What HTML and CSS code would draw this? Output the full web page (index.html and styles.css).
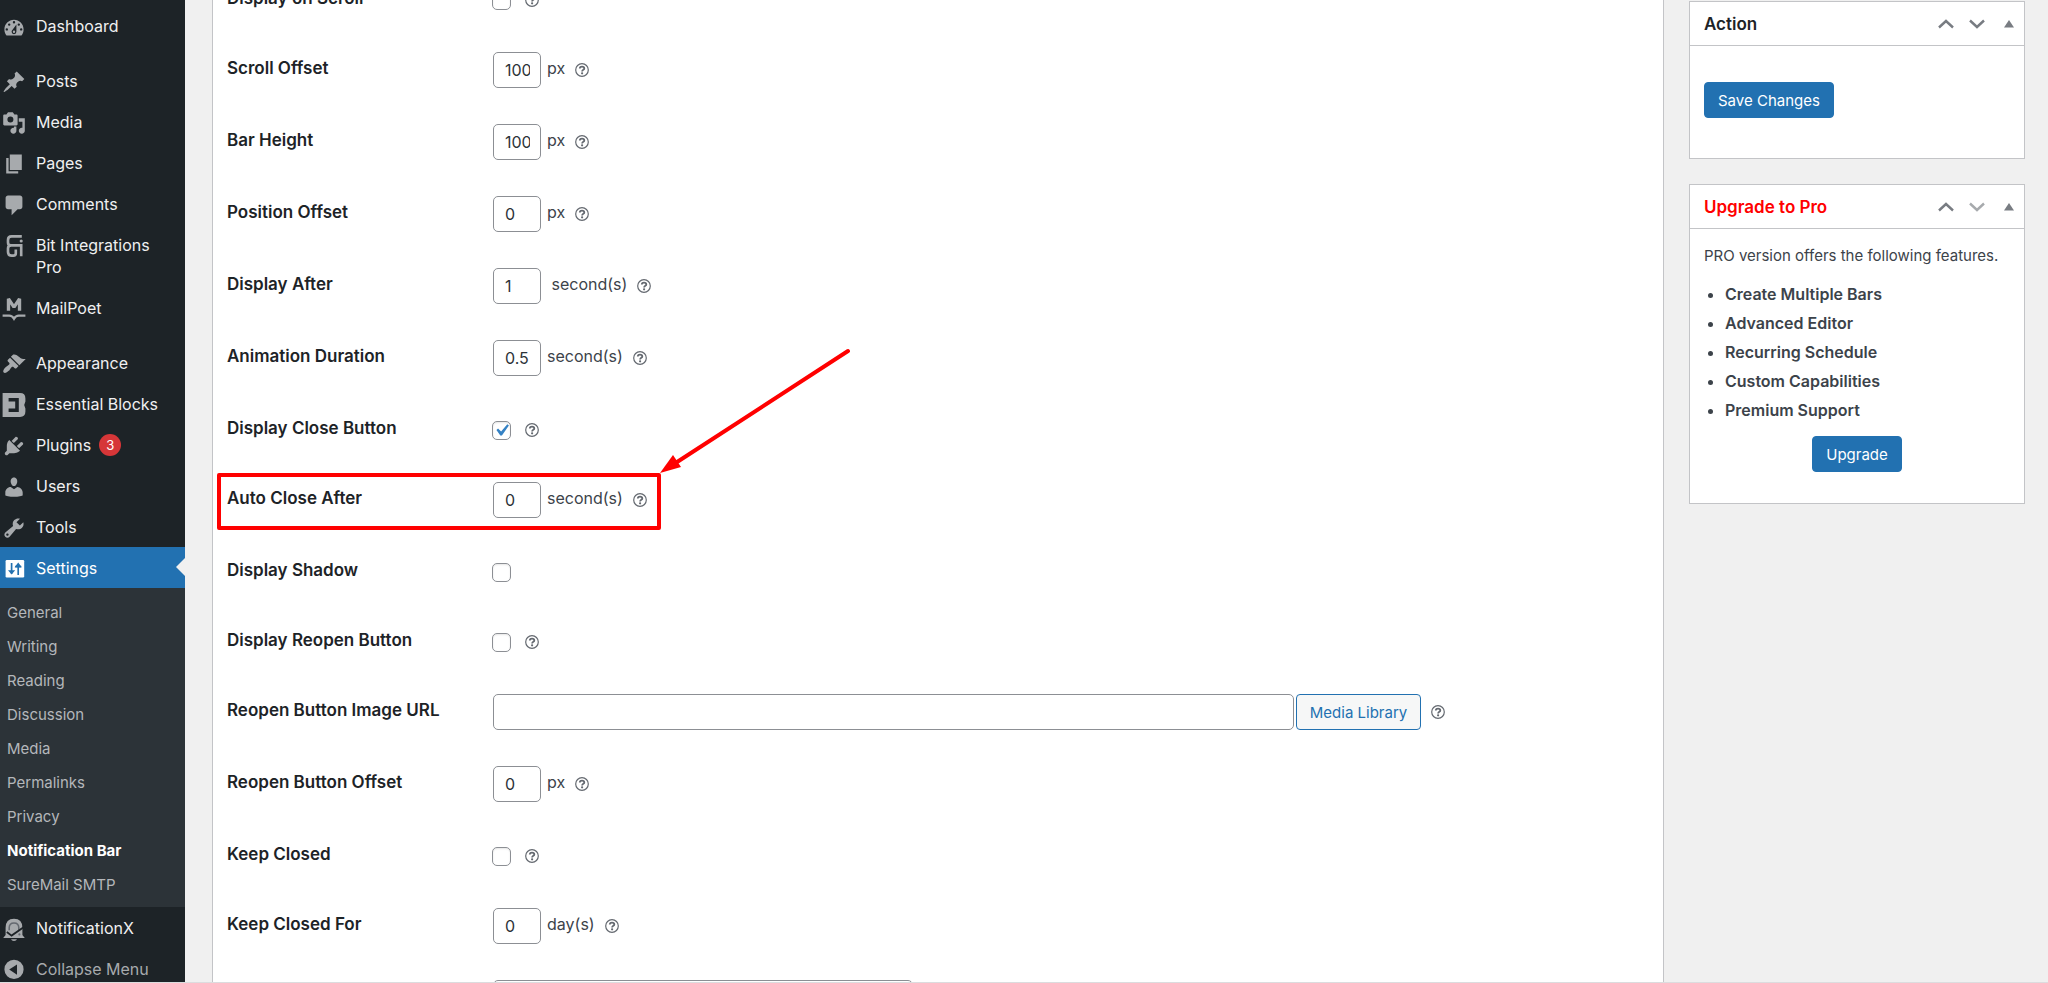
FILE: index.html
```html
<!DOCTYPE html>
<html lang="en">
<head>
    <meta charset="UTF-8">
    <meta name="viewport" content="width=device-width, initial-scale=1.0">
    <title>Notification Bar Settings</title>
    <link rel="stylesheet" href="styles.css">
</head>
<body>

<!-- Shared icons -->
<svg class="sprite" aria-hidden="true">
    <symbol id="help" viewBox="0 0 14 14">
        <circle cx="7" cy="7" r="6.3" fill="none" stroke="currentColor" stroke-width="1.2"/>
        <path d="M4.8 5.6C4.8 4.1 5.800 3.600 7 3.600s2.300.6 2.300 1.800C9.300 6.900 7.100 6.700 7.100 8.500" fill="none" stroke="currentColor" stroke-width="1.8"/>
        <circle cx="7.1" cy="10.3" r="1.1" fill="currentColor"/>
    </symbol>
    <symbol id="chevron-up" viewBox="0 0 16 10">
        <path d="M1 8.500L8 2l7 6.500" fill="none" stroke="currentColor" stroke-width="2.4"/>
    </symbol>
    <symbol id="chevron-down" viewBox="0 0 16 10">
        <path d="M1 1.500L8 8l7-6.500" fill="none" stroke="currentColor" stroke-width="2.4"/>
    </symbol>
    <symbol id="triangle" viewBox="0 0 10 8">
        <path d="M5 0l5 7.500H0z" fill="currentColor"/>
    </symbol>
</svg>

<div class="app">

    <!-- Admin menu -->
    <nav class="menu">
        <a href="#" class="menu-item">
            <svg class="icon" viewBox="0 0 20 20"><path fill-rule="evenodd" d="M3.76 17h12.48c1.1-1.370 1.760-3.110 1.760-5 0-4.420-3.580-8-8-8s-8 3.580-8 8c0 1.890.660 3.630 1.760 5zM10 5a1 1 0 1 1 0 2 1 1 0 0 1 0-2zM6 7a1 1 0 1 1 0 2 1 1 0 0 1 0-2zm8 0a1 1 0 1 1 0 2 1 1 0 0 1 0-2zm-5.370 5.550L12 8v6a2 2 0 1 1-4 0c0-.570.240-1.080.630-1.450zM4 11a1 1 0 1 1 0 2 1 1 0 0 1 0-2zm12 0a1 1 0 1 1 0 2 1 1 0 0 1 0-2zm-5 3a1 1 0 1 0-2 0 1 1 0 0 0 2 0z"/></svg>
            <span>Dashboard</span>
        </a>
        <div class="separator"></div>
        <a href="#" class="menu-item">
            <svg class="icon" viewBox="0 0 20 20"><path d="M10.44 3.02l1.82-1.82 6.36 6.35-1.83 1.82c-1.05-.68-2.48-.57-3.41.36l-.75.75c-.92.93-1.04 2.35-.35 3.41l-1.83 1.82-2.41-2.41-2.8 2.79c-.42.42-3.38 2.71-3.8 2.29s1.86-3.39 2.28-3.81l2.79-2.79L4.1 9.36l1.83-1.82c1.05.69 2.48.57 3.4-.36l.75-.75c.93-.92 1.05-2.35.36-3.41z"/></svg>
            <span>Posts</span>
        </a>
        <a href="#" class="menu-item">
            <svg class="icon" viewBox="0 0 20 20"><path fill-rule="evenodd" d="M13 11V4c0-.55-.45-1-1-1h-1.67L9 1H5L3.67 3H2c-.55 0-1 .45-1 1v7c0 .55.45 1 1 1h10c.55 0 1-.45 1-1zM7 4.500a2.500 2.500 0 1 1 0 5 2.500 2.500 0 0 1 0-5zM14 6h5v10.500c0 1.380-1.120 2.500-2.500 2.500S14 17.880 14 16.500s1.120-2.500 2.500-2.500c.170 0 .340.020.500.050V9h-3V6zm-4 8.050V13h2v3.500c0 1.380-1.120 2.500-2.500 2.500S7 17.880 7 16.500 8.120 14 9.500 14c.170 0 .340.020.500.050z"/></svg>
            <span>Media</span>
        </a>
        <a href="#" class="menu-item">
            <svg class="icon" viewBox="0 0 20 20"><path d="M6.500 15V2h10v13h-10zm-1 1h8v2h-10V5h2v11z"/></svg>
            <span>Pages</span>
        </a>
        <a href="#" class="menu-item">
            <svg class="icon" viewBox="0 0 20 20"><path d="M5 2h10c1.100 0 2 .9 2 2v7.500c0 1.100-.9 2-2 2h-2l-5 5v-5H5c-1.100 0-2-.9-2-2V4c0-1.100.9-2 2-2z"/></svg>
            <span>Comments</span>
        </a>
        <a href="#" class="menu-item">
            <svg class="icon" viewBox="0 0 20 20"><g fill="none" stroke="currentColor" stroke-width="2.200"><path d="M16.500 2H8Q5 2 5 5v2q0 2.500 2.500 2.500H16v9"/><path d="M7.500 9.500Q5 9.500 5 12v3q0 3 3 3h1.500q2 0 2-2v-3"/></g><circle cx="16" cy="5.800" r="1.300"/></svg>
            <span>Bit Integrations Pro</span>
        </a>
        <a href="#" class="menu-item">
            <svg class="icon" viewBox="0 0 20 20"><g fill="none" stroke="currentColor"><path stroke-width="2.800" d="M5.400 11.500V1.500L10 8.500l4.600-7v10" stroke-linejoin="bevel"/><path stroke-width="2" d="M.5 15.500h5.500q2.500 0 4 2.500 1.500-2.500 4-2.500h5.500"/></g></svg>
            <span>MailPoet</span>
        </a>
        <div class="separator"></div>
        <a href="#" class="menu-item">
            <svg class="icon" viewBox="0 0 20 20"><path d="M14.480 11.060L7.410 3.990l1.500-1.500c.5-.56 2.300-.47 3.510.32 1.210.8 1.430 1.280 2.910 2.100 1.180.64 2.450 1.260 4.450.85zm-.71.71L6.700 4.700 4.930 6.470c-.39.39-.39 1.020 0 1.410l1.060 1.060c.39.39.39 1.030 0 1.420-.6.6-1.430 1.110-2.210 1.690-.35.26-.7.53-1.010.84C1.430 14.230.4 16.080 1.400 17.070c.99 1 2.840-.03 4.180-1.360.31-.31.58-.66.85-1.020.57-.78 1.080-1.610 1.690-2.210.39-.39 1.020-.39 1.410 0l1.060 1.060c.39.39 1.020.39 1.410 0z"/></svg>
            <span>Appearance</span>
        </a>
        <a href="#" class="menu-item">
            <svg class="icon" viewBox="0 0 20 20"><path d="M.5 0H15q4.500 0 4.500 4.500v2.500l-1 3 1 3v2.500q0 4.500-4.500 4.500H.5z"/><path fill="#1d2327" d="M5.500 4.200H14v11.600H5.500V13H11V7H5.500z"/><path d="M5 8.500h4.500v3H5z"/></svg>
            <span>Essential Blocks</span>
        </a>
        <a href="#" class="menu-item">
            <svg class="icon" viewBox="0 0 20 20"><path d="M13.110 4.360L9.870 7.600 8 5.730l3.240-3.240c.35-.34 1.050-.2 1.560.32.52.51.66 1.210.31 1.550zm-8 1.770l.91-1.120 9.010 9.010-1.190.84c-.71.71-2.630 1.160-3.820 1.160H6.140L4.900 17.260c-.59.59-1.540.59-2.120 0-.59-.58-.59-1.530 0-2.120l1.240-1.240v-3.880c0-1.130.4-3.190 1.090-3.890zm7.260 3.970l3.240-3.240c.34-.35 1.040-.21 1.550.31.52.51.66 1.210.31 1.550l-3.240 3.250z"/></svg>
            <span>Plugins</span>
            <span class="count">3</span>
        </a>
        <a href="#" class="menu-item">
            <svg class="icon" viewBox="0 0 20 20"><path d="M10 9.250c-2.270 0-2.730-3.440-2.730-3.440C7 4.020 7.820 2 9.970 2c2.160 0 2.980 2.020 2.710 3.810 0 0-.41 3.440-2.680 3.440zm0 2.570L12.720 10c2.390 0 4.520 2.330 4.520 4.530v2.490s-3.650 1.130-7.240 1.130c-3.650 0-7.240-1.130-7.240-1.130v-2.490c0-2.250 1.940-4.480 4.470-4.480z"/></svg>
            <span>Users</span>
        </a>
        <a href="#" class="menu-item">
            <svg class="icon" viewBox="0 0 20 20"><path fill-rule="evenodd" d="M16.680 9.770c-1.340 1.340-3.300 1.670-4.950.99l-5.410 6.520c-.99.99-2.590.99-3.580 0s-.99-2.590 0-3.570l6.520-5.420c-.68-1.650-.35-3.610.99-4.950 1.280-1.280 3.120-1.620 4.720-1.060l-2.890 2.890 2.820 2.820 2.860-2.870c.53 1.580.18 3.390-1.080 4.650zM3.810 16.210c.4.39 1.040.39 1.430 0 .4-.4.4-1.040 0-1.430-.39-.4-1.030-.4-1.430 0-.39.39-.39 1.030 0 1.430z"/></svg>
            <span>Tools</span>
        </a>
        <a href="#" class="menu-item current">
            <svg class="icon" viewBox="0 0 20 20"><rect x="3" y="2.500" width="15.500" height="14.500" rx="1"/><g fill="none" stroke="#2271b1" stroke-width="1.400"><path d="M8 5v9M13.500 15V6M11 8h5"/></g><path fill="#2271b1" d="M5 11h6l-3 3.500zM13.500 4.500l3 4h-6z"/></svg>
            <span>Settings</span>
        </a>
        <div class="submenu">
            <a href="#">General</a>
            <a href="#">Writing</a>
            <a href="#">Reading</a>
            <a href="#">Discussion</a>
            <a href="#">Media</a>
            <a href="#">Permalinks</a>
            <a href="#">Privacy</a>
            <a href="#" class="active">Notification Bar</a>
            <a href="#">SureMail SMTP</a>
        </div>
        <a href="#" class="menu-item">
            <svg class="icon" viewBox="0 0 20 20"><path d="M1 17.500l2-2.500V9q0-7.500 7-7.500T17 9v6l2 2.500zM7.500 18.500h5q-.5 1.500-2.500 1.500t-2.500-1.500z"/><path d="M6 11V9q0-4 4-4t4 4v2" fill="none" stroke="#646970" stroke-width="1.300"/><path d="M4 12.500l4 3 10-7" fill="none" stroke="#1d2327" stroke-width="1.500"/><circle cx="14.500" cy="14.500" r=".9" fill="#646970"/></svg>
            <span>NotificationX</span>
        </a>
        <button type="button" class="menu-item collapse">
            <svg class="icon" viewBox="0 0 20 20"><path fill-rule="evenodd" d="M10 1.500a8 8 0 1 1 0 16 8 8 0 0 1 0-16zM12.500 5.500L6 9.500l6.500 4.500z"/></svg>
            <span>Collapse Menu</span>
        </button>
    </nav>

    <!-- Settings form -->
    <main class="panel">
        <form class="settings">
            <div class="row row-check">
                <label for="on-scroll">Display on Scroll</label>
                <div class="field"><input type="checkbox" id="on-scroll"><svg class="help"><use href="#help"/></svg></div>
            </div>
            <div class="row">
                <label for="scroll-offset">Scroll Offset</label>
                <div class="field"><input type="text" class="small" id="scroll-offset" value="100"><span>px</span><svg class="help"><use href="#help"/></svg></div>
            </div>
            <div class="row">
                <label for="bar-height">Bar Height</label>
                <div class="field"><input type="text" class="small" id="bar-height" value="100"><span>px</span><svg class="help"><use href="#help"/></svg></div>
            </div>
            <div class="row">
                <label for="position-offset">Position Offset</label>
                <div class="field"><input type="text" class="small" id="position-offset" value="0"><span>px</span><svg class="help"><use href="#help"/></svg></div>
            </div>
            <div class="row">
                <label for="display-after">Display After</label>
                <div class="field"><input type="text" class="small" id="display-after" value="1"><span>&nbsp;second(s)</span><svg class="help"><use href="#help"/></svg></div>
            </div>
            <div class="row">
                <label for="duration">Animation Duration</label>
                <div class="field"><input type="text" class="small" id="duration" value="0.5"><span>second(s)</span><svg class="help"><use href="#help"/></svg></div>
            </div>
            <div class="row row-check">
                <label for="close-button">Display Close Button</label>
                <div class="field"><input type="checkbox" id="close-button" checked><svg class="help"><use href="#help"/></svg></div>
            </div>
            <div class="row marked">
                <label for="auto-close">Auto Close After</label>
                <div class="field"><input type="text" class="small" id="auto-close" value="0"><span>second(s)</span><svg class="help"><use href="#help"/></svg></div>
                <div class="mark"></div>
                <svg class="arrow" viewBox="0 0 192 126">
                    <path d="M188 4L14 117" fill="none" stroke="#f00" stroke-width="4" stroke-linecap="round"/>
                    <path d="M0 126l13-18 8 12z" fill="#f00"/>
                </svg>
            </div>
            <div class="row row-check">
                <label for="shadow">Display Shadow</label>
                <div class="field"><input type="checkbox" id="shadow"></div>
            </div>
            <div class="row row-check">
                <label for="reopen">Display Reopen Button</label>
                <div class="field"><input type="checkbox" id="reopen"><svg class="help"><use href="#help"/></svg></div>
            </div>
            <div class="row">
                <label for="image-url">Reopen Button Image URL</label>
                <div class="field"><input type="text" class="url" id="image-url"><button type="button" class="button">Media Library</button><svg class="help"><use href="#help"/></svg></div>
            </div>
            <div class="row">
                <label for="reopen-offset">Reopen Button Offset</label>
                <div class="field"><input type="text" class="small" id="reopen-offset" value="0"><span>px</span><svg class="help"><use href="#help"/></svg></div>
            </div>
            <div class="row row-check">
                <label for="keep-closed">Keep Closed</label>
                <div class="field"><input type="checkbox" id="keep-closed"><svg class="help"><use href="#help"/></svg></div>
            </div>
            <div class="row">
                <label for="closed-for">Keep Closed For</label>
                <div class="field"><input type="text" class="small" id="closed-for" value="0"><span>day(s)</span><svg class="help"><use href="#help"/></svg></div>
            </div>
            <div class="row">
                <span></span>
                <div class="field"><input type="text" class="medium" aria-label="Next setting"></div>
            </div>
        </form>
    </main>

    <!-- Right boxes -->
    <aside class="side">
        <section class="box">
            <header class="box-header">
                <h2>Action</h2>
                <button type="button" aria-label="Move up"><svg class="chevron"><use href="#chevron-up"/></svg></button>
                <button type="button" aria-label="Move down"><svg class="chevron"><use href="#chevron-down"/></svg></button>
                <button type="button" aria-label="Toggle panel"><svg class="toggle"><use href="#triangle"/></svg></button>
            </header>
            <div class="box-action">
                <button type="button" class="button primary">Save Changes</button>
            </div>
        </section>
        <section class="box">
            <header class="box-header">
                <h2 class="pro">Upgrade to Pro</h2>
                <button type="button" aria-label="Move up"><svg class="chevron"><use href="#chevron-up"/></svg></button>
                <button type="button" aria-label="Move down" class="off"><svg class="chevron"><use href="#chevron-down"/></svg></button>
                <button type="button" aria-label="Toggle panel"><svg class="toggle"><use href="#triangle"/></svg></button>
            </header>
            <div class="box-pro">
                <p>PRO version offers the following features.</p>
                <ul>
                    <li>Create Multiple Bars</li>
                    <li>Advanced Editor</li>
                    <li>Recurring Schedule</li>
                    <li>Custom Capabilities</li>
                    <li>Premium Support</li>
                </ul>
                <button type="button" class="button primary">Upgrade</button>
            </div>
        </section>
    </aside>

</div>

</body>
</html>
```
FILE: styles.css
```css
* {
    box-sizing: border-box;
}

body {
    margin: 0;
    font-family: Inter, "Liberation Sans", sans-serif;
    font-size: 16px;
    color: #3c434a;
    background: #f0f0f0;
    overflow: hidden;
}

a {
    text-decoration: none;
}

button {
    font-family: inherit;
    cursor: pointer;
}

.sprite {
    display: none;
}

.app {
    display: flex;
    height: 100vh;
    overflow: hidden;
    border-bottom: 1px solid #dcdcde;
}

/* Admin menu */
.menu {
    flex: 0 0 185px;
    padding-top: 5px;
    background: #1d2327;
    overflow: hidden;
}

.menu-item {
    position: relative;
    display: flex;
    align-items: flex-start;
    gap: 10px;
    padding: 10px 10px 9px 2px;
    font-size: 16px;
    line-height: 22px;
    color: #f0f0f1;
}

.icon {
    flex: none;
    width: 24px;
    height: 24px;
    margin-bottom: -2px;
    color: #a7aaad;
    fill: currentColor;
}

.count {
    width: 22px;
    height: 22px;
    margin-left: -2px;
    border-radius: 11px;
    background: #d63638;
    color: #fff;
    font-size: 13px;
    text-align: center;
}

.separator {
    height: 14px;
}

.current {
    background: #2271b1;
    color: #fff;
}

.current .icon {
    color: #fff;
}

.current::after {
    content: "";
    position: absolute;
    right: 0;
    top: 11px;
    border: 9px solid transparent;
    border-left: 0;
    border-right-color: #f0f0f0;
}

.submenu {
    display: flex;
    flex-direction: column;
    padding: 8px 7px 5px;
    background: #2c3338;
}

.submenu a {
    font-size: 15px;
    line-height: 34px;
    color: #b4b7bb;
}

.submenu .active {
    color: #fff;
    font-weight: 700;
}

.collapse {
    width: 100%;
    border: 0;
    background: none;
    color: #a7aaad;
    text-align: left;
}

/* Settings form */
.panel {
    flex: 1;
    margin-left: 27px;
    padding: 0 26px 0 14px;
    background: #fff;
    border: 1px solid #c3c4c7;
    border-width: 0 1px;
    overflow: hidden;
}

/* Page is scrolled partway down */
.settings {
    margin-top: -36px;
}

.row {
    display: grid;
    grid-template-columns: 266px 1fr;
    padding: 18px 0;
}

.row-check {
    padding-bottom: 16px;
}

.row label {
    font-size: 17px;
    font-weight: 600;
    line-height: 32px;
    color: #1d2327;
}

.field {
    display: flex;
    align-items: center;
    height: 36px;
}

.field span {
    margin-left: 6px;
    line-height: 32px;
    padding-bottom: 4px;
}

.help {
    flex: none;
    width: 14px;
    height: 14px;
    margin-left: 10px;
    color: #646970;
}

input[type="text"] {
    height: 36px;
    padding: 0 10px 0 11px;
    border: 1px solid #8c8f94;
    border-radius: 5px;
    background: #fff;
    color: #2c3338;
    font-family: inherit;
    font-size: 16px;
}

input.small {
    width: 48px;
}

input.medium {
    width: 420px;
}

input.url {
    width: 70%;
    margin-right: 2px;
}

input[type="checkbox"] {
    appearance: none;
    width: 19px;
    height: 19px;
    margin: 0 4px 0 -1px;
    border: 1px solid #8c8f94;
    border-radius: 5px;
    background: #fff center / 24px no-repeat;
    box-shadow: inset 0 1px 2px rgba(0, 0, 0, 0.1);
}

input[type="checkbox"]:checked {
    background-image: url("data:image/svg+xml,%3Csvg xmlns='http://www.w3.org/2000/svg' viewBox='0 0 20 20'%3E%3Cpath d='M14.830 4.890l1.340.94-5.810 8.380H9.020L5.780 9.670l1.340-1.250 2.570 2.400z' fill='%233582c4'/%3E%3C/svg%3E");
}

/* Highlight drawn over the auto close row */
.marked {
    position: relative;
}

.mark {
    position: absolute;
    left: -10px;
    top: 9px;
    width: 444px;
    height: 57px;
    border: 4px solid #f00;
    border-radius: 2px;
}

.arrow {
    position: absolute;
    left: 433px;
    top: -117px;
    width: 192px;
    height: 126px;
}

/* Buttons */
.button {
    height: 36px;
    padding: 0 13px;
    border: 1px solid #2271b1;
    border-radius: 4px;
    background: #f6f7f7;
    color: #2271b1;
    font-size: 15px;
    white-space: nowrap;
}

.primary {
    background: #2271b1;
    color: #fff;
}

/* Right boxes */
.side {
    display: flex;
    flex-direction: column;
    flex: 0 0 336px;
    gap: 25px;
    margin: 1px 23px 0 25px;
}

.box {
    background: #fff;
    border: 1px solid #c3c4c7;
}

.box-header {
    display: flex;
    align-items: center;
    height: 44px;
    padding: 0 10px 0 14px;
    border-bottom: 1px solid #c3c4c7;
}

.box-header h2 {
    flex: 1;
    margin: 0;
    font-size: 17px;
    font-weight: 600;
    color: #1d2327;
}

.box-header .pro {
    color: #f00;
}

.box-header button {
    display: flex;
    padding: 0;
    border: 0;
    margin-left: 15px;
    background: none;
    color: #787c82;
}

.box-header .off {
    color: #a7aaad;
}

.box-header button:last-child {
    margin-left: 19px;
}

.chevron {
    width: 16px;
    height: 10px;
}

.toggle {
    width: 10px;
    height: 8px;
}

.box-action {
    padding: 36px 14px 40px;
}

.box-pro {
    padding: 16px 14px 31px;
    font-size: 15px;
    text-align: center;
}

.box-pro p {
    margin: 0 0 13px;
    line-height: 22px;
    text-align: left;
}

.box-pro ul {
    margin: 0 0 11px;
    padding-left: 21px;
    font-size: 16px;
    font-weight: 600;
    line-height: 29px;
    text-align: left;
}
```
